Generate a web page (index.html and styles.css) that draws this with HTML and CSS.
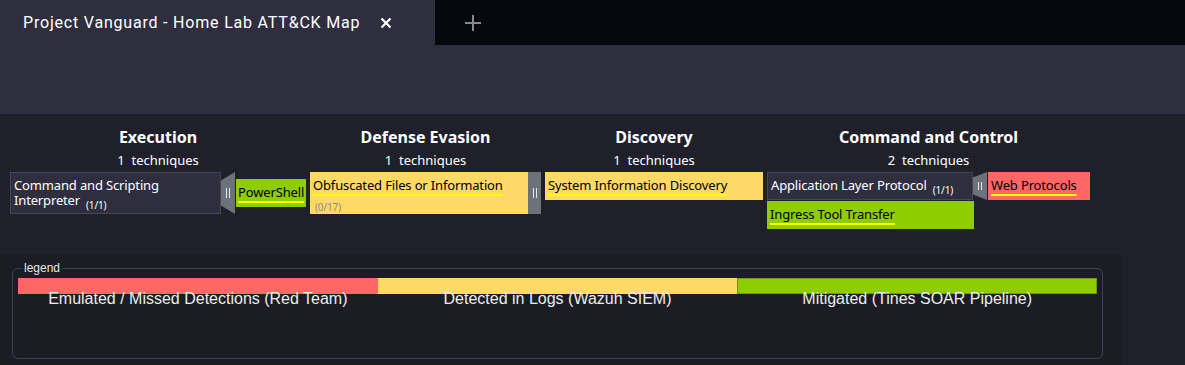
FILE: index.html
```html
<!DOCTYPE html>
<html lang="en">
<head>
    <meta charset="UTF-8">
    <title>Project Vanguard - Home Lab ATT&amp;CK Map</title>
    <link rel="stylesheet" href="styles.css">
</head>
<body>
    <div class="tabbar">
        <div class="tab">
            <span class="tab-title">Project Vanguard - Home Lab ATT&amp;CK Map</span>
            <svg class="tab-close" width="12" height="12" viewBox="0 0 12 12">
                <path d="M1.5 1.5 L10.5 10.5 M10.5 1.5 L1.5 10.5" stroke="#fff" stroke-width="2.2"/>
            </svg>
        </div>
        <div class="tab-strip">
            <svg class="tab-new" width="16" height="16" viewBox="0 0 16 16">
                <path d="M8 0 V16 M0 8 H16" stroke="#8a8a8a" stroke-width="2"/>
            </svg>
        </div>
    </div>
    <div class="toolbar"></div>

    <div class="matrix">
        <div class="tactic">
            <div class="tactic-name">Execution</div>
            <div class="tactic-count">1&nbsp; techniques</div>
            <div class="tech-row">
                <div class="tech dark tall w-exec">Command and Scripting Interpreter<span class="count">(1/1)</span></div>
                <div class="sidebar arrow"><span class="grip"></span></div>
                <div class="subtechs">
                    <div class="tech green w-ps"><span class="mark">PowerShell</span></div>
                </div>
            </div>
        </div>

        <div class="tactic">
            <div class="tactic-name">Defense Evasion</div>
            <div class="tactic-count">1&nbsp; techniques</div>
            <div class="tech-row">
                <div class="tech yellow tall w-def">
                    <span class="mark">Obfuscated Files or Information</span>
                    <div class="count-line">(0/17)</div>
                </div>
                <div class="sidebar"><span class="grip"></span></div>
            </div>
        </div>

        <div class="tactic">
            <div class="tactic-name">Discovery</div>
            <div class="tactic-count">1&nbsp; techniques</div>
            <div class="tech-row">
                <div class="tech yellow w-disc"><span class="mark">System Information Discovery</span></div>
            </div>
        </div>

        <div class="tactic">
            <div class="tactic-name">Command and Control</div>
            <div class="tactic-count">2&nbsp; techniques</div>
            <div class="tech-row">
                <div class="tech dark w-c2">Application Layer Protocol<span class="count">(1/1)</span></div>
                <div class="sidebar arrow"><span class="grip short"></span></div>
                <div class="subtechs">
                    <div class="tech red w-web"><span class="mark">Web Protocols</span></div>
                </div>
            </div>
            <div class="tech green w-ingress stacked"><span class="mark">Ingress Tool Transfer</span></div>
        </div>
    </div>

    <div class="legend-panel">
        <fieldset class="legend">
            <legend>legend</legend>
            <div class="legend-items">
                <div class="legend-item">
                    <div class="legend-bar red"></div>
                    <div class="legend-label">Emulated / Missed Detections (Red Team)</div>
                </div>
                <div class="legend-item">
                    <div class="legend-bar yellow"></div>
                    <div class="legend-label">Detected in Logs (Wazuh SIEM)</div>
                </div>
                <div class="legend-item">
                    <div class="legend-bar green"></div>
                    <div class="legend-label">Mitigated (Tines SOAR Pipeline)</div>
                </div>
            </div>
        </fieldset>
    </div>
</body>
</html>
```

FILE: styles.css
```css
body {
    margin: 0;
    background-color: #20202b;
    font-family: "Noto Sans", sans-serif;
    color: #fff;
    overflow: hidden;
}
.tabbar {
    display: flex;
    height: 45px;
    background-color: #2f2e3f;
}
.tab {
    width: 435px;
    display: flex;
    align-items: center;
    padding-left: 23px;
    box-sizing: border-box;
}
.tab-title {
    font-family: Roboto, sans-serif;
    font-size: 16px;
    letter-spacing: 0.8px;
    color: #fff;
}
.tab-close {
    margin-left: 20px;
    margin-top: 1px;
}
.tab-strip {
    flex: 1;
    background-color: #07080c;
    display: flex;
    align-items: center;
    padding-left: 30px;
}
.tab-new {
    margin-top: 1px;
}
.toolbar {
    height: 69px;
    background-color: #2f2e3f;
}

/* matrix */
.matrix {
    display: flex;
    align-items: flex-start;
    gap: 4px;
    padding-left: 10px;
    height: 140px;
}
.tactic {
    display: flex;
    flex-direction: column;
}
.tactic-name {
    text-align: center;
    font-weight: bold;
    font-size: 16px;
    padding-top: 12px;
    line-height: 22px;
}
.tactic-count {
    text-align: center;
    font-size: 13px;
    line-height: 20px;
    padding-top: 2px;
    margin-bottom: 2px;
}
.tech-row {
    display: flex;
    align-items: center;
}
.tech {
    box-sizing: border-box;
    font-size: 13px;
    letter-spacing: -0.15px;
    line-height: 15px;
    padding: 6px 3px 0 3px;
    height: 28px;
    color: #000;
    white-space: nowrap;
}
.tech.tall {
    height: 42px;
    white-space: normal;
}
.tech.dark {
    background-color: #2f2e3f;
    border: 1px solid #46455a;
    color: #fff;
    padding: 5px 3px 0 3px;
}
.tech.green {
    background-color: #8fcc00;
}
.tech.yellow {
    background-color: #ffd966;
}
.tech.red {
    background-color: #ff6666;
}
.mark {
    text-decoration: underline;
    text-decoration-color: #ffff00;
    text-decoration-thickness: 2px;
    text-underline-offset: 4px;
}
.count {
    display: inline-block;
    font-size: 10px;
    line-height: 10px;
    margin-left: 6px;
    vertical-align: -4px;
}
.count-line {
    font-size: 10px;
    color: #8a8a8a;
    margin-top: 9px;
    margin-left: 2px;
    line-height: 10px;
}
.w-exec { width: 211px; }
.w-ps { width: 70px; padding-left: 2px; }
.w-def { width: 218px; }
.w-disc { width: 218px; }
.w-c2 { width: 206px; }
.w-web { width: 102px; }
.w-ingress { width: 207px; }
.stacked {
    margin-top: 1px;
}
.sidebar {
    align-self: stretch;
    width: 13px;
    background-color: #6c727a;
    display: flex;
    align-items: center;
    justify-content: center;
}
.sidebar.arrow {
    width: 14px;
    clip-path: polygon(100% 0, 100% 100%, 0 80%, 0 20%);
}
.grip {
    width: 2px;
    height: 10px;
    border-left: 1px solid #e6e6e6;
    border-right: 1px solid #e6e6e6;
}
.grip.short {
    height: 8px;
}
.subtechs {
    display: flex;
    flex-direction: column;
    margin-left: 1px;
}

/* legend */
.legend-panel {
    background-color: #1c1c24;
    width: 1121px;
    height: 111px;
    padding: 8px 18px 0 12px;
    box-sizing: border-box;
}
.legend {
    margin: 0;
    padding: 0 5px 0 5px;
    height: 97px;
    box-sizing: border-box;
    border: 1px solid #414055;
    border-radius: 6px;
}
.legend legend {
    font-family: "Liberation Sans", Arial, sans-serif;
    font-size: 12px;
    color: #e6e6e6;
    padding: 0 2px;
    margin-left: 4px;
    line-height: 12px;
}
.legend-items {
    display: flex;
    margin-top: 4px;
}
.legend-item {
    flex: 1;
}
.legend-bar {
    height: 16px;
}
.legend-bar.red { background-color: #ff6666; }
.legend-bar.yellow { background-color: #ffd966; }
.legend-bar.green { background-color: #8fcc00; border: 1px solid #6f9a10; box-sizing: border-box; }
.legend-label {
    font-family: "Liberation Sans", Arial, sans-serif;
    font-size: 16px;
    line-height: 16px;
    margin-top: -3px;
    text-align: center;
    color: #ececec;
}
```
